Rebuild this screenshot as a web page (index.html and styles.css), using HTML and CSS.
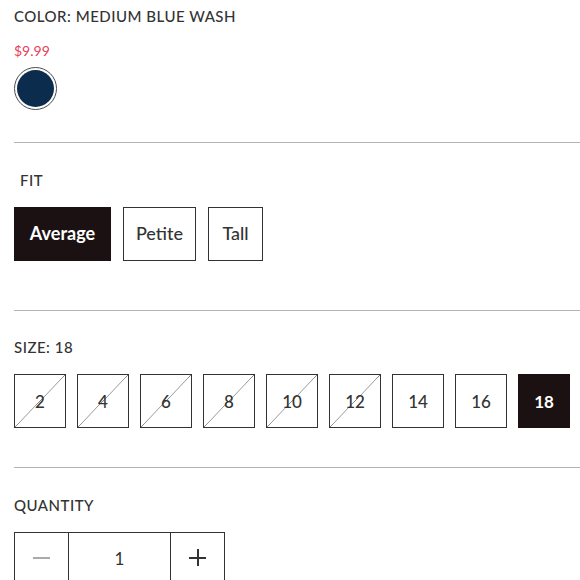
FILE: index.html
```html
<!DOCTYPE html>
<html lang="en">
<head>
<meta charset="utf-8">
<title>Product options</title>
<link rel="stylesheet" href="styles.css">
</head>
<body>
<div class="page">
  <section class="color-section">
    <div class="label title">COLOR: MEDIUM BLUE WASH</div>
    <div class="price">$9.99</div>
    <div class="swatch"><span class="swatch-fill"></span></div>
  </section>
  <hr class="divider">
  <section class="fit-section">
    <div class="label fit-label">FIT</div>
    <div class="fit-options">
      <button class="fit-btn active avg">Average</button>
      <button class="fit-btn petite">Petite</button>
      <button class="fit-btn tall">Tall</button>
    </div>
  </section>
  <hr class="divider">
  <section class="size-section">
    <div class="label">SIZE: 18</div>
    <div class="size-options">
      <button class="size-btn unavailable">2</button>
      <button class="size-btn unavailable">4</button>
      <button class="size-btn unavailable">6</button>
      <button class="size-btn unavailable">8</button>
      <button class="size-btn unavailable">10</button>
      <button class="size-btn unavailable">12</button>
      <button class="size-btn">14</button>
      <button class="size-btn">16</button>
      <button class="size-btn active">18</button>
    </div>
  </section>
  <hr class="divider">
  <section class="qty-section">
    <div class="label">QUANTITY</div>
    <div class="qty">
      <button class="qty-btn minus"><span class="minus-bar"></span></button>
      <div class="qty-value">1</div>
      <button class="qty-btn plus"><span class="plus-h"></span><span class="plus-v"></span></button>
    </div>
  </section>
</div>
</body>
</html>
```
FILE: styles.css
```css
html, body {
  margin: 0;
  padding: 0;
  background: #fff;
}
body {
  font-family: Lato, "Liberation Sans", sans-serif;
  color: #333;
  overflow: hidden;
}
.page {
  padding-left: 14px;
}
.label {
  font-size: 15px;
  line-height: 20px;
  font-weight: 500;
  letter-spacing: 0.5px;
  color: #333;
}
.color-section {
  padding-top: 6px;
  height: 136px;
}
.price {
  margin-top: 16px;
  font-size: 14px;
  line-height: 18px;
  color: #e8405a;
}
.swatch {
  margin-top: 7px;
  width: 43px;
  height: 43px;
  box-sizing: border-box;
  border: 1px solid #4a4a4a;
  border-radius: 50%;
  padding: 2px;
}
.swatch-fill {
  display: block;
  width: 100%;
  height: 100%;
  border-radius: 50%;
  background: #0c2c4d;
}
.divider {
  margin: 0;
  border: 0;
  border-top: 1px solid #b4b4b4;
  height: 0;
}
.fit-section {
  padding-top: 27px;
  height: 167px;
  box-sizing: border-box;
}
.fit-label {
  padding-left: 6px;
}
.fit-options {
  margin-top: 17px;
  display: flex;
  gap: 12px;
}
.fit-btn {
  font-family: inherit;
  height: 54px;
  box-sizing: border-box;
  border: 1px solid #333;
  background: #fff;
  color: #333;
  font-size: 18px;
  font-weight: 500;
  padding: 0 0 2px;
  margin: 0;
}
.fit-btn.avg { width: 97px; }
.fit-btn.petite { width: 73px; }
.fit-btn.tall { width: 55px; }
.fit-btn.active {
  background: #1b1112;
  border-color: #1b1112;
  color: #fff;
  font-weight: 700;
}
.size-section {
  padding-top: 26px;
  height: 156px;
  box-sizing: border-box;
}
.size-options {
  margin-top: 17px;
  display: flex;
  gap: 11px;
}
.size-btn {
  font-family: inherit;
  width: 52px;
  height: 54px;
  box-sizing: border-box;
  border: 1px solid #333;
  background: #fff;
  color: #333;
  font-size: 17px;
  font-weight: 500;
  padding: 0;
  margin: 0;
}
.size-btn.unavailable {
  background-image: linear-gradient(to bottom right, transparent calc(50% - 0.6px), #808080 50%, transparent calc(50% + 0.6px));
}
.size-btn.active {
  background: #1b1112;
  border-color: #1b1112;
  color: #fff;
  font-weight: 700;
}
.qty-section {
  padding-top: 27px;
}
.qty {
  margin-top: 17px;
  display: flex;
  width: 211px;
  height: 60px;
  box-sizing: border-box;
  border: 1px solid #333;
}
.qty-btn {
  width: 53px;
  border: 0;
  background: #fff;
  padding: 0;
  margin: 0;
  position: relative;
}
.qty-value {
  width: 103px;
  border-left: 1px solid #333;
  border-right: 1px solid #333;
  display: flex;
  align-items: center;
  justify-content: center;
  font-size: 17px;
  color: #333;
  padding-bottom: 8px;
  box-sizing: border-box;
}
.minus-bar {
  position: absolute;
  left: 18px;
  top: 24px;
  width: 17px;
  height: 2px;
  background: #aaa;
}
.plus-h {
  position: absolute;
  left: 18px;
  top: 24px;
  width: 17px;
  height: 2px;
  background: #333;
}
.plus-v {
  position: absolute;
  left: 25.5px;
  top: 16px;
  width: 2px;
  height: 17px;
  background: #333;
}
```
